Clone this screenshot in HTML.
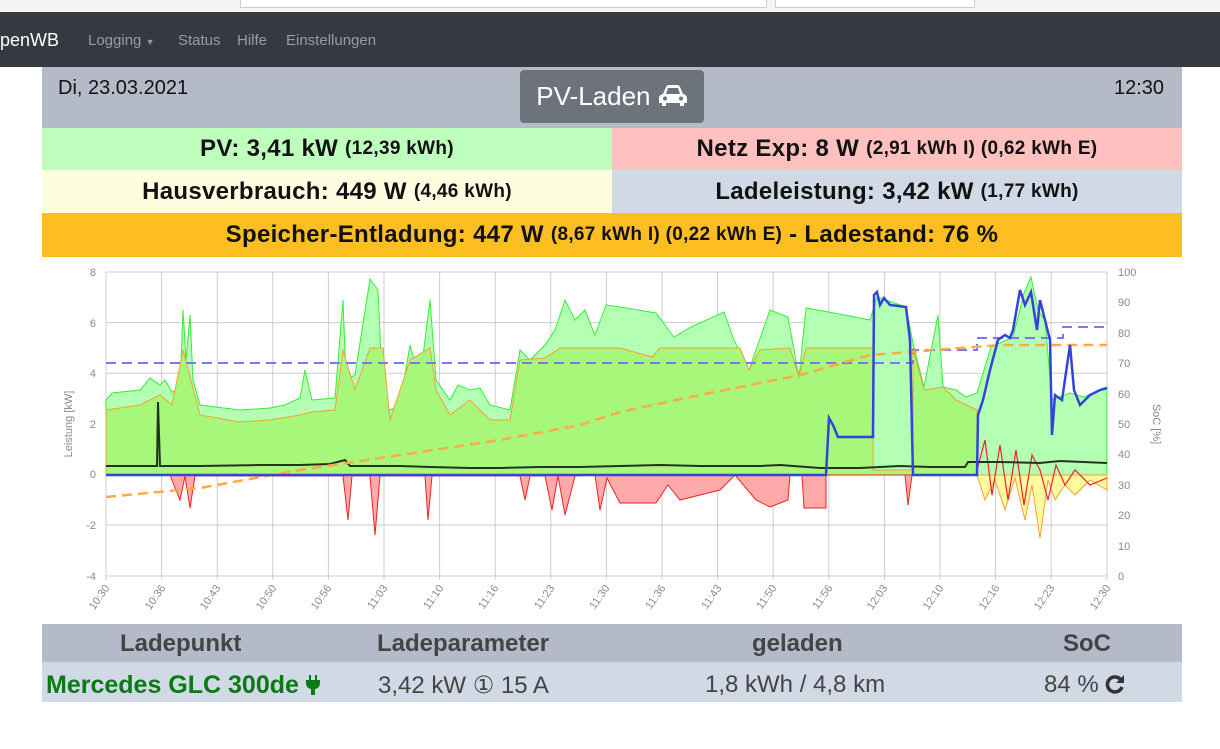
<!DOCTYPE html>
<html><head><meta charset="utf-8"><style>
body{margin:0;width:1220px;height:749px;background:#fff;font-family:"Liberation Sans","DejaVu Sans",sans-serif;position:relative;overflow:hidden}
.a{position:absolute}
.nav{left:0;top:12px;width:1220px;height:55px;background:#343a40}
.nav span{position:absolute;top:20px;font-size:15px;color:#9a9da1}
.row{position:absolute;display:flex;align-items:center;justify-content:center;font-weight:bold;font-size:24px;color:#111;letter-spacing:0.3px}
.row small{font-size:19px}
.th{position:absolute;top:630px;font-size:24px;font-weight:bold;color:#444}
.td{position:absolute;top:671px;font-size:24px;color:#444}
</style></head><body>
<div class="a" style="left:0;top:0;width:1220px;height:12px;background:#f5f5f5"></div>
<div class="a" style="left:240px;top:-2px;width:525px;height:8px;border:1px solid #ccc;background:#fff"></div>
<div class="a" style="left:775px;top:-2px;width:198px;height:8px;border:1px solid #ccc;background:#fff"></div>
<div class="a nav">
<span style="left:0;top:18px;font-size:18px;color:#fff">penWB</span>
<span style="left:88px">Logging <span style="position:static;font-size:9px">▼</span></span>
<span style="left:178px">Status</span>
<span style="left:237px">Hilfe</span>
<span style="left:286px">Einstellungen</span>
</div>
<div class="a" style="left:42px;top:67px;width:1140px;height:61px;background:#b5bac8"></div>
<div class="a" style="left:58px;top:77px;font-size:20px;color:#111">Di, 23.03.2021</div>
<div class="a" style="left:1114px;top:77px;font-size:20px;color:#111">12:30</div>
<div class="a" style="left:520px;top:70px;width:184px;height:53px;background:#6c737b;border-radius:4px;color:#fff;font-size:26px;line-height:53px;text-align:center">PV-Laden <svg width="30" height="22" viewBox="0 0 30 22" style="vertical-align:-2px"><path d="M5 9 L8 2 Q9 0 11 0 H19 Q21 0 22 2 L25 9 Q29 10 29 13 V18 H26 V21 H22 V18 H8 V21 H4 V18 H1 V13 Q1 10 5 9Z M8 9 H22 L20 3 H10Z" fill="#fff" fill-rule="evenodd"/><circle cx="7" cy="13.5" r="2" fill="#6c737b"/><circle cx="23" cy="13.5" r="2" fill="#6c737b"/></svg></div>
<div class="row" style="left:42px;top:128px;width:570px;height:42px;background:#beffbe">PV: 3,41 kW&nbsp;<small>(12,39 kWh)</small></div>
<div class="row" style="left:612px;top:128px;width:570px;height:42px;background:#ffc0c0">Netz Exp: 8 W&nbsp;<small>(2,91 kWh I) (0,62 kWh E)</small></div>
<div class="row" style="left:42px;top:170px;width:570px;height:43px;background:#fffde0">Hausverbrauch: 449 W&nbsp;<small>(4,46 kWh)</small></div>
<div class="row" style="left:612px;top:170px;width:570px;height:43px;background:#d2d9e6">Ladeleistung: 3,42 kW&nbsp;<small>(1,77 kWh)</small></div>
<div class="row" style="left:42px;top:213px;width:1140px;height:44px;background:#fdbe22">Speicher-Entladung: 447 W&nbsp;<small>(8,67 kWh I) (0,22 kWh E)</small>&nbsp;- Ladestand: 76 %</div>

<svg class="a" style="left:0;top:0" width="1220" height="749">
<g stroke="#ccc" stroke-width="1">
<line x1="106" y1="272" x2="1107" y2="272"/><line x1="106" y1="322.6" x2="1107" y2="322.6"/><line x1="106" y1="373.2" x2="1107" y2="373.2"/><line x1="106" y1="423.8" x2="1107" y2="423.8"/><line x1="106" y1="474.4" x2="1107" y2="474.4"/><line x1="106" y1="525" x2="1107" y2="525"/><line x1="106" y1="576" x2="1107" y2="576"/>
</g>
<g stroke="#ccc">
<line x1="106" y1="272" x2="106" y2="580"/><line x1="161.6" y1="272" x2="161.6" y2="580"/><line x1="217.2" y1="272" x2="217.2" y2="580"/><line x1="272.8" y1="272" x2="272.8" y2="580"/><line x1="328.4" y1="272" x2="328.4" y2="580"/><line x1="384" y1="272" x2="384" y2="580"/><line x1="439.6" y1="272" x2="439.6" y2="580"/><line x1="495.2" y1="272" x2="495.2" y2="580"/><line x1="550.8" y1="272" x2="550.8" y2="580"/><line x1="606.4" y1="272" x2="606.4" y2="580"/><line x1="662" y1="272" x2="662" y2="580"/><line x1="717.6" y1="272" x2="717.6" y2="580"/><line x1="773.2" y1="272" x2="773.2" y2="580"/><line x1="828.8" y1="272" x2="828.8" y2="580"/><line x1="884.4" y1="272" x2="884.4" y2="580"/><line x1="940" y1="272" x2="940" y2="580"/><line x1="995.6" y1="272" x2="995.6" y2="580"/><line x1="1051.2" y1="272" x2="1051.2" y2="580"/><line x1="1107" y1="272" x2="1107" y2="580"/>
</g>
<polygon fill="#b3ffb3" stroke="#33ee33" stroke-width="1" points="106,475 106,400 112,393 140,390 150,378 160,385 165,380 172,392 180,390 183,310 186,360 190,315 193,380 200,405 240,410 270,408 285,405 300,398 305,370 312,400 335,398 343,300 346,380 355,375 370,279 378,290 383,400 390,410 400,405 410,345 420,380 430,300 436,380 450,400 458,385 470,390 480,388 490,405 510,410 520,350 530,360 545,345 555,330 565,300 575,320 585,310 595,335 606,305 620,307 656,313 674,337 691,327 724,312 734,340 749,370 770,310 788,317 799,377 806,308 834,313 870,320 877,297 906,307 913,343 924,387 938,315 943,387 956,390 966,397 977,393 991,347 1013,337 1024,293 1031,277 1038,310 1045,320 1052,400 1070,393 1084,397 1107,387 1107,475"/>
<polygon fill="#a6f77a" stroke="#f5a030" stroke-width="1" points="106,475 106,410 140,405 160,395 172,405 183,350 200,415 240,422 270,420 300,415 312,412 335,410 343,350 355,390 370,348 383,348 390,420 410,360 430,348 436,390 450,415 470,400 490,420 510,420 520,360 545,358 560,348 620,348 652,357 660,348 720,348 740,348 749,370 760,350 790,348 799,377 806,348 873,348 873,470 913,470 913,348 924,390 943,387 956,400 977,410 977,475"/>
<polygon fill="#ffaaaa" stroke="#ee2222" stroke-width="1" points="106,475 170,475 180,500 185,476 190,508 195,476 343,476 348,520 352,476 370,476 375,535 380,476 425,476 428,520 432,476 520,476 525,500 530,476 545,476 552,510 558,476 565,515 575,476 595,475 600,510 607,478 620,503 656,503 668,485 680,500 700,495 720,490 735,475 756,500 770,507 788,500 790,475 802,475 804,508 826,508 826,475 905,475 908,505 912,475 1107,475"/>
<polygon fill="#fffaa0" stroke="#f5a030" stroke-width="1" points="977,475 985,500 995,480 1005,510 1015,478 1025,520 1032,485 1040,538 1048,480 1055,500 1065,485 1075,495 1090,480 1107,490 1107,475"/>
<polyline fill="none" stroke="#ee2222" stroke-width="1.2" points="977,470 985,440 992,495 1000,445 1008,500 1016,450 1024,505 1032,455 1040,470 1048,500 1056,465 1065,485 1075,470 1090,485 1107,478"/>
<polyline fill="none" stroke="#223322" stroke-width="2" points="106,466 157,466 158,402 160,466 200,466 260,465 300,465 330,464 345,460 350,466 400,466 430,467 470,468 500,468 540,467 580,467 620,466 660,465 700,466 740,466 760,466 780,465 820,468 860,468 900,466 930,467 965,467 968,462 1000,462 1040,463 1060,461 1107,463"/>
<polyline fill="none" stroke="#7777ff" stroke-width="2" stroke-dasharray="10,6" points="106,363 913,363 913,350 977,350 977,338 1063,338 1063,327 1107,327"/>
<polyline fill="none" stroke="#ffaa44" stroke-width="2.5" stroke-dasharray="10,6" points="106,497 200,488 300,470 400,455 500,440 580,425 620,412 700,395 800,375 870,355 1000,345 1107,345"/>
<polyline fill="none" stroke="#3344dd" stroke-width="2.5" points="106,475 826,475 829,418 833,425 838,437 873,437 874,295 877,292 880,305 884,298 890,305 906,307 910,340 913,475 977,475 978,415 983,400 990,370 998,340 1005,335 1010,338 1013,330 1020,290 1025,305 1031,292 1037,330 1040,300 1045,320 1050,340 1052,435 1055,395 1062,400 1070,345 1074,390 1080,405 1090,395 1100,390 1107,388"/>
<g font-size="11" fill="#888" text-anchor="end">
<text x="96" y="276">8</text><text x="96" y="327">6</text><text x="96" y="377">4</text><text x="96" y="428">2</text><text x="96" y="478">0</text><text x="96" y="529">-2</text><text x="96" y="580">-4</text>
</g>
<g font-size="11" fill="#888">
<text x="1118" y="276">100</text><text x="1118" y="306">90</text><text x="1118" y="337">80</text><text x="1118" y="367">70</text><text x="1118" y="398">60</text><text x="1118" y="428">50</text><text x="1118" y="458">40</text><text x="1118" y="489">30</text><text x="1118" y="519">20</text><text x="1118" y="550">10</text><text x="1118" y="580">0</text>
</g>
<text transform="translate(72,424) rotate(-90)" font-size="11" fill="#888" text-anchor="middle">Leistung [kW]</text>
<text transform="translate(1153,424) rotate(90)" font-size="11" fill="#888" text-anchor="middle">SoC [%]</text>
<g font-size="11" fill="#888" text-anchor="end">
<text transform="translate(110,588) rotate(-55)">10:30</text><text transform="translate(166,588) rotate(-55)">10:36</text><text transform="translate(221,588) rotate(-55)">10:43</text><text transform="translate(277,588) rotate(-55)">10:50</text><text transform="translate(332,588) rotate(-55)">10:56</text><text transform="translate(388,588) rotate(-55)">11:03</text><text transform="translate(444,588) rotate(-55)">11:10</text><text transform="translate(499,588) rotate(-55)">11:16</text><text transform="translate(555,588) rotate(-55)">11:23</text><text transform="translate(610,588) rotate(-55)">11:30</text><text transform="translate(666,588) rotate(-55)">11:36</text><text transform="translate(722,588) rotate(-55)">11:43</text><text transform="translate(777,588) rotate(-55)">11:50</text><text transform="translate(833,588) rotate(-55)">11:56</text><text transform="translate(888,588) rotate(-55)">12:03</text><text transform="translate(944,588) rotate(-55)">12:10</text><text transform="translate(1000,588) rotate(-55)">12:16</text><text transform="translate(1055,588) rotate(-55)">12:23</text><text transform="translate(1111,588) rotate(-55)">12:30</text>
</g>
</svg>

<div class="a" style="left:42px;top:624px;width:1140px;height:38px;background:#b5bac8"></div>
<div class="a" style="left:42px;top:662px;width:1140px;height:40px;background:#d2d9e6"></div>
<div class="th" style="left:120px">Ladepunkt</div>
<div class="th" style="left:377px">Ladeparameter</div>
<div class="th" style="left:752px">geladen</div>
<div class="th" style="left:1063px">SoC</div>
<div class="td" style="left:46px;font-weight:bold;color:#0a7a12;font-size:25px">Mercedes GLC 300de <svg width="14" height="20" viewBox="0 0 14 20" style="vertical-align:-2px"><path d="M3 0h2v5h4V0h2v5h3v3q0 5-5 6v6H5v-6Q0 13 0 8V5h3z" fill="#0a7a12"/></svg></div>
<div class="td" style="left:378px">3,42 kW ① 15 A</div>
<div class="td" style="left:705px">1,8 kWh / 4,8 km</div>
<div class="td" style="left:1044px">84 % <svg width="20" height="20" viewBox="0 0 20 20" style="vertical-align:-2px"><path d="M16 6A7.5 7.5 0 1 0 17 13" fill="none" stroke="#333" stroke-width="3.5"/><path d="M19 1V9H11Z" fill="#333"/></svg></div>
</body></html>
